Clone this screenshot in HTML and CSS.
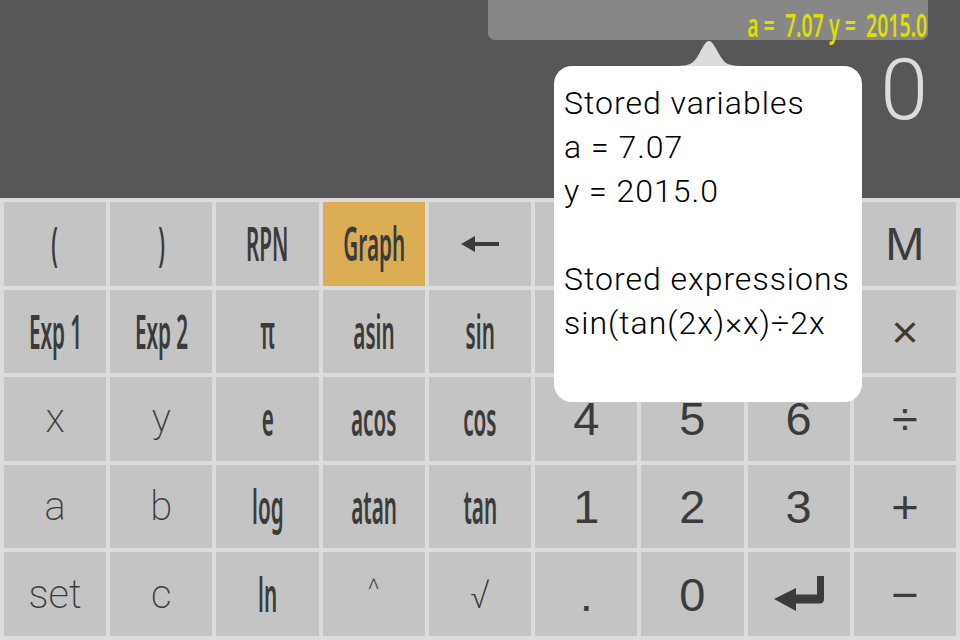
FILE: index.html
```html
<!DOCTYPE html>
<html>
<head>
<meta charset="utf-8">
<link rel="stylesheet" href="styles.css">
</head>
<body>
<div class="app">
  <header class="display">
    <div class="varbar"><span class="cond vars">a =  7.07 y =  2015.0</span></div>
    <div class="result">0</div>
  </header>
  <main class="keypad">
    <div class="key"><span class="cond">(</span></div>
    <div class="key"><span class="cond">)</span></div>
    <div class="key"><span class="cond">RPN</span></div>
    <div class="key graph"><span class="cond">Graph</span></div>
    <div class="key"><svg class="back" width="38" height="16" viewBox="0 0 38 16"><path d="M0 8 L14 0 L14 6 L38 6 L38 10 L14 10 L14 16 Z" fill="#3b3b3b"/></svg></div>
    <div class="key"></div>
    <div class="key"></div>
    <div class="key"></div>
    <div class="key digit">M</div>

    <div class="key"><span class="cond">Exp 1</span></div>
    <div class="key"><span class="cond">Exp 2</span></div>
    <div class="key"><span class="cond">π</span></div>
    <div class="key"><span class="cond">asin</span></div>
    <div class="key"><span class="cond">sin</span></div>
    <div class="key"></div>
    <div class="key"></div>
    <div class="key"></div>
    <div class="key op">×</div>

    <div class="key light">x</div>
    <div class="key light">y</div>
    <div class="key"><span class="cond">e</span></div>
    <div class="key"><span class="cond">acos</span></div>
    <div class="key"><span class="cond">cos</span></div>
    <div class="key digit">4</div>
    <div class="key digit">5</div>
    <div class="key digit">6</div>
    <div class="key op">÷</div>

    <div class="key light">a</div>
    <div class="key light">b</div>
    <div class="key"><span class="cond">log</span></div>
    <div class="key"><span class="cond">atan</span></div>
    <div class="key"><span class="cond">tan</span></div>
    <div class="key digit">1</div>
    <div class="key digit">2</div>
    <div class="key digit">3</div>
    <div class="key op">+</div>

    <div class="key light">set</div>
    <div class="key light">c</div>
    <div class="key"><span class="cond">ln</span></div>
    <div class="key light small">^</div>
    <div class="key light">√</div>
    <div class="key digit">.</div>
    <div class="key digit">0</div>
    <div class="key"><svg class="enter" width="50" height="36" viewBox="0 0 50 36"><path d="M0 23 L22 12 L22 18.5 L43 18.5 L43 0 L50 0 L50 23 Q50 27.5 45.5 27.5 L22 27.5 L22 35 Z" fill="#3b3b3b"/></svg></div>
    <div class="key op">−</div>
  </main>

  <svg class="tip-arrow" width="72" height="26" viewBox="0 0 72 26"><path d="M0 26 C18 26 20 24 26 14 C31 5 33 1 36 1 C39 1 41 5 46 14 C52 24 54 26 72 26 Z" fill="#dcdcdc"/></svg>
  <div class="popup">
    <p>Stored variables</p>
    <p>a = 7.07</p>
    <p>y = 2015.0</p>
    <p class="gap">Stored expressions</p>
    <p>sin(tan(2x)×x)÷2x</p>
  </div>
</div>
</body>
</html>
```
FILE: styles.css
```css
html, body {
  margin: 0;
  padding: 0;
  width: 960px;
  height: 640px;
  overflow: hidden;
  background: #dcdcdc;
}

.app {
  position: relative;
  width: 960px;
  height: 640px;
  display: flex;
  flex-direction: column;
}

.display {
  height: 198px;
  background: #575757;
  display: flex;
  flex-direction: column;
  align-items: flex-end;
  padding-right: 32px;
  box-sizing: border-box;
}

.varbar {
  width: 440px;
  height: 40px;
  background: #878787;
  border-radius: 0 0 7px 7px;
  display: flex;
  justify-content: flex-end;
  align-items: flex-start;
  padding-top: 10px;
  box-sizing: border-box;
}

.cond {
  display: inline-block;
  font-family: "Noto Sans", "DejaVu Sans Condensed", sans-serif;
  font-weight: 600;
  font-size: 47px;
  line-height: 1;
  white-space: pre;
  transform: scaleX(0.44);
}

.vars {
  color: #dede00;
  font-size: 32px;
  line-height: 30px;
  transform-origin: right center;
  transform: scaleX(0.61);
  margin-right: 1px;
}

.result {
  font-family: Roboto, "Liberation Sans", sans-serif;
  font-weight: 300;
  font-size: 86px;
  line-height: 1;
  color: #dcdcdc;
  margin-top: 7px;
  margin-right: 0;
}

.keypad {
  flex: 1;
  display: grid;
  grid-template-columns: repeat(9, 1fr);
  grid-template-rows: repeat(5, 1fr);
  gap: 4px;
  padding: 4px;
  background: #dcdcdc;
}

.key {
  background: #c4c4c4;
  color: #3b3b3b;
  display: flex;
  align-items: center;
  justify-content: center;
  overflow: hidden;
  font-family: "Liberation Sans", Arial, sans-serif;
}

.key.graph {
  background: #dbad55;
}

.digit, .op {
  font-size: 47px;
}

.light {
  font-family: Roboto, "Liberation Sans", sans-serif;
  font-weight: 200;
  font-size: 40px;
}

.light.small {
  font-size: 30px;
  padding-bottom: 10px;
}

.tip-arrow {
  position: absolute;
  left: 673px;
  top: 40px;
}

.popup {
  position: absolute;
  left: 554px;
  top: 66px;
  width: 308px;
  height: 336px;
  box-sizing: border-box;
  background: #ffffff;
  border-radius: 18px;
  padding: 15px 0 0 10px;
  font-family: Roboto, "Liberation Sans", sans-serif;
  font-weight: 280;
  font-size: 32px;
  line-height: 44px;
  color: #000000;
  letter-spacing: 1px;
}

.popup p {
  margin: 0;
  white-space: nowrap;
}

.popup p.gap {
  margin-top: 44px;
}
```
